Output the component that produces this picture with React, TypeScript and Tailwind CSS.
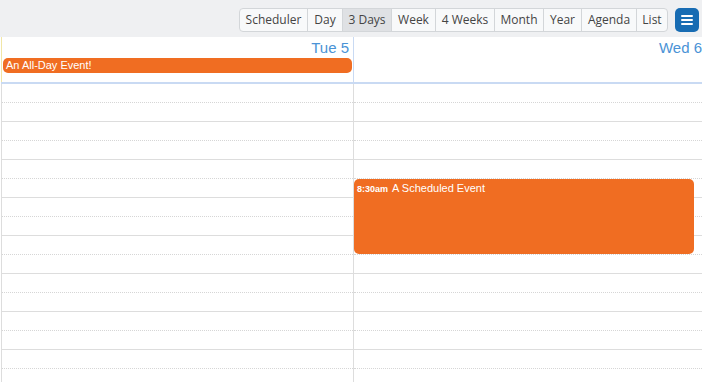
import { useState } from "react";

const views = [
  { label: "Scheduler", w: "w-[67px]" },
  { label: "Day", w: "w-[35px]" },
  { label: "3 Days", w: "w-[49px]" },
  { label: "Week", w: "w-[44px]" },
  { label: "4 Weeks", w: "w-[59px]" },
  { label: "Month", w: "w-[49px]" },
  { label: "Year", w: "w-[38px]" },
  { label: "Agenda", w: "w-[55px]" },
  { label: "List", w: "w-[31px]" },
];

const slots = Array.from({ length: 16 }, (_, i) => i);

const Slots = () => (
  <>
    {slots.map((i) => (
      <div
        key={i}
        className={
          i % 2 === 0
            ? "h-[19px] border-b border-dotted border-[#d6d6d6]"
            : "h-[19px] border-b border-[#dddddd]"
        }
      />
    ))}
  </>
);

const App = () => {
  const [view, setView] = useState<string>("3 Days");

  return (
    <div className="w-[702px] h-[382px] overflow-hidden bg-white font-['Liberation_Sans',Arial,sans-serif]">
      {/* toolbar */}
      <div className="h-[37px] bg-[#eff0f2] flex justify-end items-start pt-[8px] pr-[3px] gap-[7px]">
        <div className="flex h-[24px] rounded-[4px] border border-[#d3d6d9] overflow-hidden bg-[#f8f9fa] font-['Open_Sans',sans-serif] text-[12px] text-[#444]">
          {views.map((v, i) => (
            <button
              key={v.label}
              onClick={() => setView(v.label)}
              className={`${v.w} h-full flex items-center justify-center leading-none ${
                i > 0 ? "border-l border-[#d3d6d9]" : ""
              } ${view === v.label ? "bg-[#dfe1e4]" : ""}`}
            >
              {v.label}
            </button>
          ))}
        </div>
        <button className="w-[24px] h-[24px] rounded-[5px] bg-[#186cb3] flex items-center justify-center">
          <svg width="12" height="10" viewBox="0 0 12 10">
            <path
              d="M1 1h10M1 5h10M1 9h10"
              stroke="white"
              strokeWidth="2"
              strokeLinecap="round"
            />
          </svg>
        </button>
      </div>

      {/* day headers */}
      <div className="flex border-b-2 border-[#c9daf3] ml-[1px]">
        <div className="w-[353px] h-[45px] shrink-0 border-l border-[#f1e6a6] border-r border-r-[#c9daf3] pt-[2px]">
          <div className="text-right pr-[4px] text-[15px] leading-[17px] text-[#4a93d6]">Tue 5</div>
          <div className="mt-[2px] mx-[1px] h-[15px] rounded-[5px] bg-[#f06d22] text-white text-[11px] leading-[15px] px-[3px]">
            An All-Day Event!
          </div>
        </div>
        <div className="w-[353px] h-[45px] shrink-0 border-r border-[#c9daf3] pt-[2px]">
          <div className="text-right pr-[4px] text-[15px] leading-[17px] text-[#4a93d6]">Wed 6</div>
        </div>
      </div>

      {/* time grid */}
      <div className="flex ml-[1px]">
        <div className="w-[353px] shrink-0 border-l border-r border-[#dddddd]">
          <Slots />
        </div>
        <div className="relative w-[353px] shrink-0 border-r border-[#dddddd]">
          <Slots />
          <div className="absolute top-[95px] left-0 w-[340px] h-[75px] rounded-[5px] bg-[#f06d22] text-white px-[3px] leading-[15px]">
            <span className="text-[9px] font-bold">8:30am</span>
            <span className="text-[11px] ml-[4px]">A Scheduled Event</span>
          </div>
        </div>
      </div>
    </div>
  );
};

export default App;
